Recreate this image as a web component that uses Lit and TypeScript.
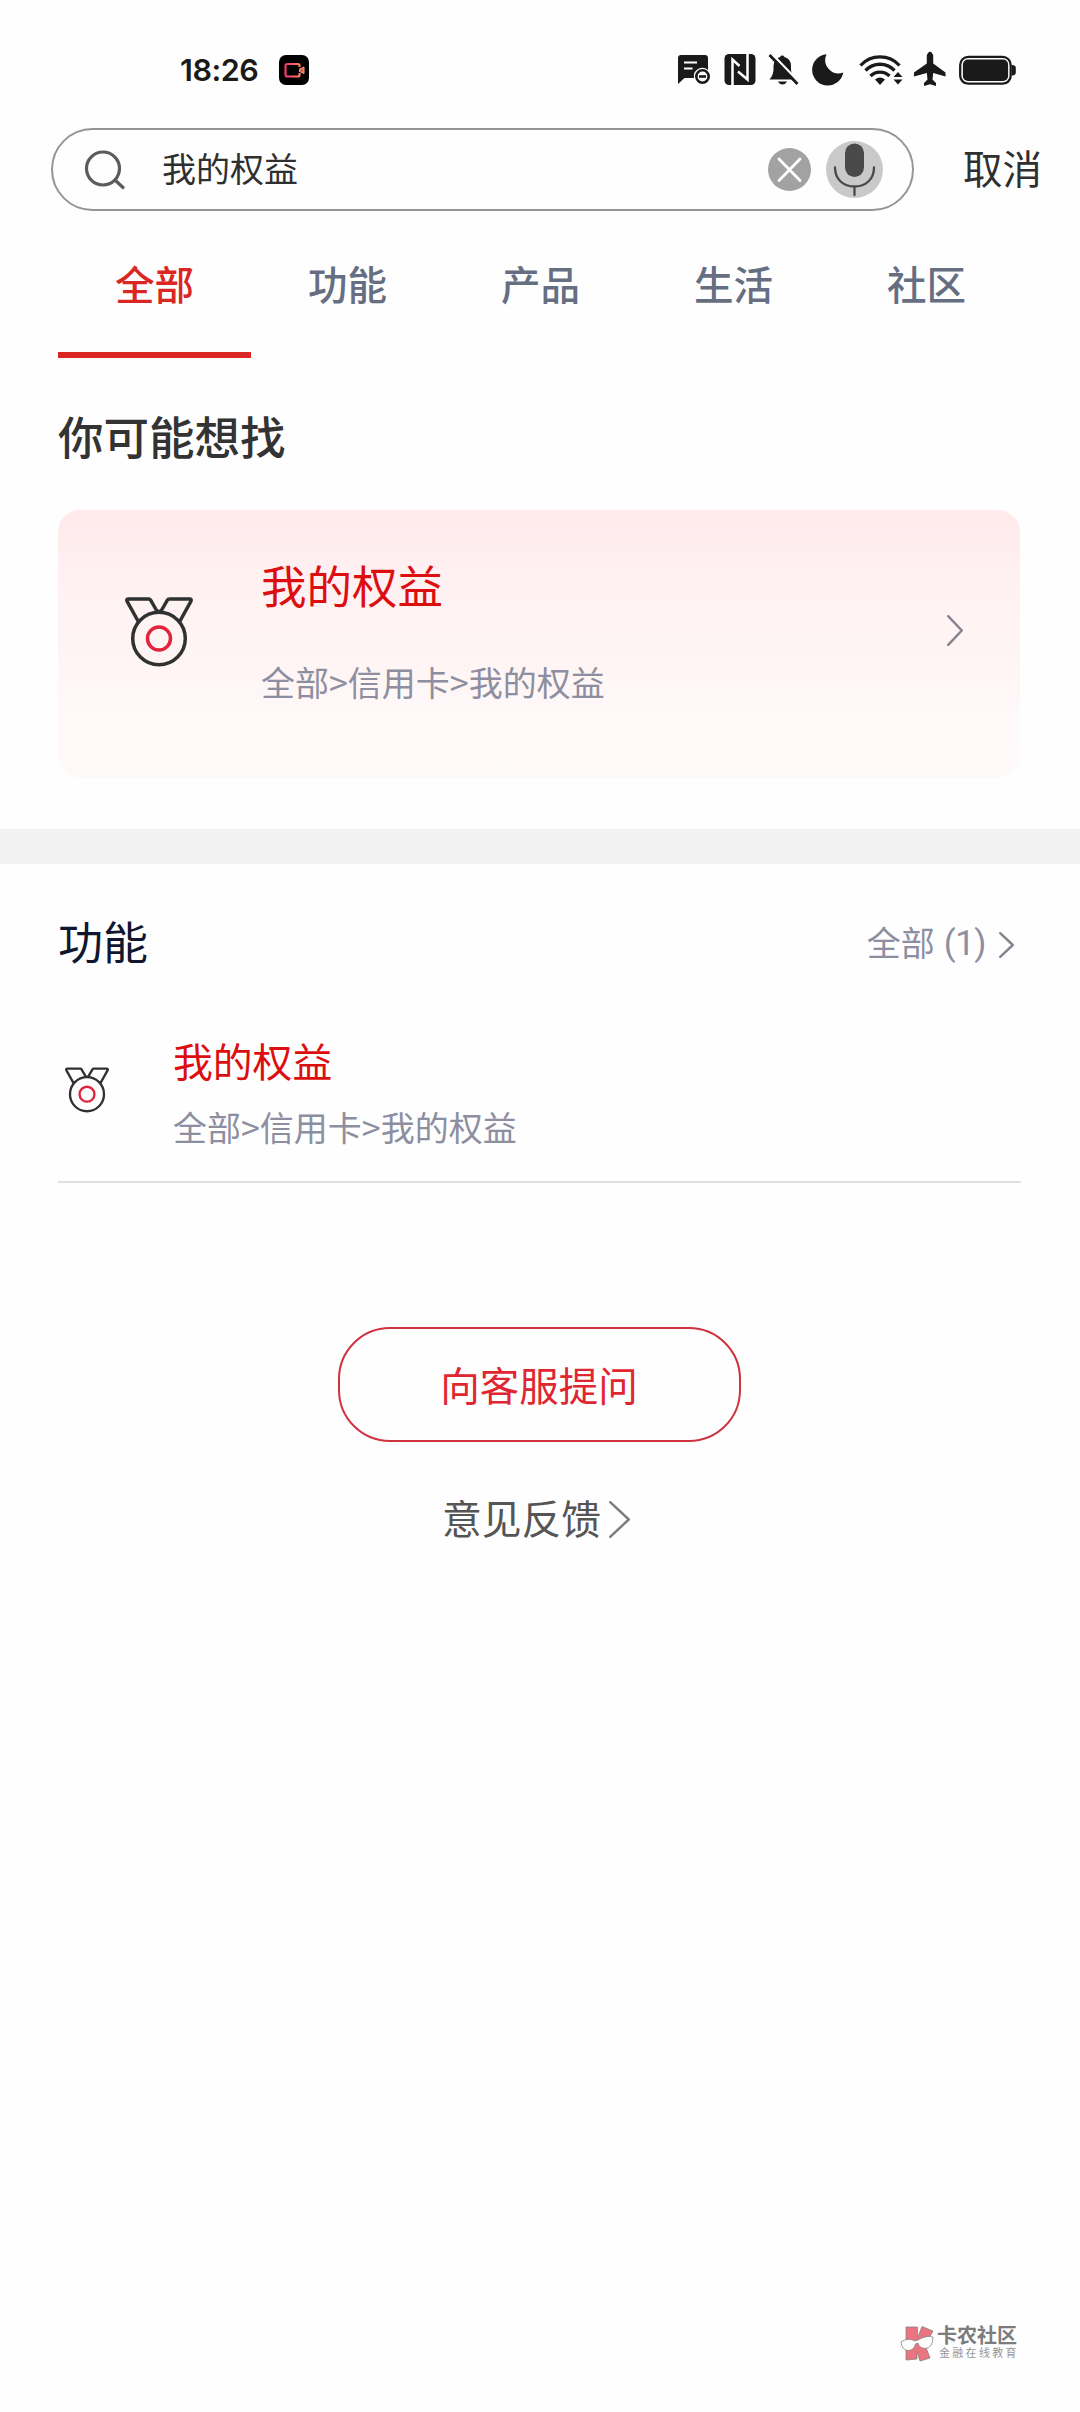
import { LitElement, html, svg, css } from "lit";
import { customElement, property } from "lit/decorators.js";

@customElement("medal-icon")
class MedalIcon extends LitElement {
  @property({ type: Number }) stroke = 3.5;

  static styles = css`
    :host { display: block; flex: none; }
    .medal { display: block; width: 100%; height: 100%; overflow: visible; }
  `;

  render() {
    return html`<svg class="medal" viewBox="0 0 68 70" fill="none" stroke="#2f3133" stroke-width=${this.stroke} stroke-linejoin="round" stroke-linecap="round">
      <path d="M13 24 L2 4.200 Q1.200 2 3.400 2 H23.500 Q25 2 25.800 3.400 L31 12.500 Q32 14.500 34 14.500 Q36 14.500 37 12.500 L42.200 3.400 Q43 2 44.500 2 H64.600 Q66.800 2 66 4.200 L55 24"/>
      <circle cx="34" cy="41.500" r="26.300"/>
      <circle cx="34" cy="41.500" r="11.500" stroke="#e0243a"/>
    </svg>`;
  }
}

@customElement("arrow-icon")
class ArrowIcon extends LitElement {
  @property({ type: Number }) w = 16;
  @property({ type: Number }) h = 31;
  @property() color = "#85828f";

  static styles = css`
    :host { display: block; flex: none; }
    .arrow { display: block; }
  `;

  render() {
    const { w, h } = this;
    return html`<svg class="arrow" width=${w} height=${h} viewBox="0 0 ${w} ${h}" fill="none" stroke=${this.color} stroke-width="2.400" stroke-linecap="round" stroke-linejoin="round">
      <path d="M1.200 1.200 L${w - 1.2} ${h / 2} L1.200 ${h - 1.2}"/>
    </svg>`;
  }
}

const statusIcons = svg`
  <g fill="#1a1a1a">
    <path d="M4 5 H28 Q31 5 31 8 V20 A8.500 8.500 0 0 0 17 28 H7.500 L1 34 V8 Q1 5 4 5 Z"/>
    <path d="M7 12.500 H20 M7 18.500 H15.500" stroke="#fff" stroke-width="2.200" fill="none"/>
    <circle cx="25.500" cy="26.500" r="6.200" fill="#fefefe" stroke="#1a1a1a" stroke-width="2.600"/>
    <path d="M22 26.500 H29" stroke="#1a1a1a" stroke-width="2.600"/>

    <rect x="47.500" y="4" width="31" height="31" rx="4.500"/>
    <path d="M55.500 35 V9.500 L62.500 16 M70.500 4 V29.500 L61 21.500" fill="none" stroke="#fefefe" stroke-width="2.500"/>

    <path d="M92.500 29.500 Q96.500 25 96.500 19 V16 Q97 9 103 7 A2.500 2.500 0 0 1 107.500 7 Q114 9 114 16 V19 Q114 25 118 29.500 Z"/>
    <path d="M101 31.500 H110 Q108.500 34.500 105.500 34.500 Q102.500 34.500 101 31.500 Z"/>
    <path d="M94.500 3.500 L122.500 32.500" stroke="#fefefe" stroke-width="2.500"/>
    <path d="M92.500 5 L120.500 34" stroke="#1a1a1a" stroke-width="2.800"/>

    <path d="M149.500 4.200 A15.700 15.700 0 1 0 166.300 22.600 A13.500 13.500 0 0 1 149.500 4.200 Z"/>

    <g fill="none" stroke="#1a1a1a" stroke-width="3.300">
      <path d="M183.500 15.500 A26.500 26.500 0 0 1 222.500 15.500"/>
      <path d="M188.500 20.500 A20 20 0 0 1 217.500 20.500"/>
      <path d="M193.500 26 A13.500 13.500 0 0 1 212.500 26"/>
    </g>
    <path d="M198 29.500 A8 8 0 0 1 208 29.500 L203 35 Z"/>
    <path d="M221 22 L225.500 27 H216.500 Z M221 34.500 L225.500 29.500 H216.500 Z"/>

    <path d="M249.800 5 Q253 -2 256.200 5 V13.500 L268.500 22.500 V26.500 L256.200 23 L255.500 29.500 L259 33 V36 L253 34.300 L247 36 V33 L250.500 29.500 L249.800 23 L237 26.500 V22.500 L249.800 13.500 Z"/>

    <rect x="283.200" y="6.900" width="50.500" height="26.800" rx="8" fill="none" stroke="#1a1a1a" stroke-width="2.300"/>
    <rect x="285.900" y="9.600" width="45.200" height="21.400" rx="5"/>
    <path d="M335 15 Q338.800 15 338.800 18 V22.500 Q338.800 25.500 335 25.500 Z"/>
  </g>`;

const tabs = ["全部", "功能", "产品", "生活", "社区"];

@customElement("app-root")
class AppRoot extends LitElement {
  static styles = css`
    :host {
      display: block;
      position: relative;
      width: 1080px;
      height: 2412px;
      overflow: hidden;
      background: #fefefe;
      color: #2f2f2f;
      font-family: "Noto Sans CJK SC", sans-serif;
      font-weight: 400;
    }
    .status { display: flex; align-items: center; height: 60px; padding: 40px 40px 28px 180px; }
    .time { font: 600 30.500px/60px Inter, sans-serif; color: #1a1a1a; letter-spacing: -0.500px; width: 99px; }
    .rec { width: 30px; height: 30px; }
    .sys { margin-left: auto; }

    .search-row { display: flex; align-items: center; height: 83px; padding-left: 51px; }
    .search {
      box-sizing: border-box; display: flex; flex: none; align-items: center;
      width: 863px; height: 83px; padding: 0 29px 0 31px;
      border: 2px solid #959595; border-radius: 42px;
    }
    .glass { flex: none; margin-top: -1px; }
    .query { flex: 1; margin-left: 37px; font-size: 34px; line-height: 50px; padding-bottom: 4px; }
    .clear { margin-right: 15px; }
    .cancel { margin-left: 49px; font-size: 39.500px; line-height: 56px; padding-bottom: 6px; white-space: nowrap; }

    .tabs { display: grid; grid-template-columns: repeat(5, 193px); padding-left: 58px; }
    .tab {
      box-sizing: border-box; height: 147px; padding-top: 2px; text-align: center;
      font-size: 39.500px; line-height: 139px; font-weight: 500; color: #666e82;
      border-bottom: 6px solid transparent;
    }
    .tab.active { color: #da2723; border-color: #da2723; }

    .heading { margin: 0; padding: 3px 0 0 58px; font-size: 45.500px; line-height: 149px; font-weight: 500; color: #333; }
    .card {
      box-sizing: border-box; display: flex; align-items: flex-start;
      width: 962px; height: 268px; margin-left: 58px; padding: 44px 57px 0 67px;
      border-radius: 22px;
      background: linear-gradient(#ffe9eb, #fff1f2 26%, #fff5f5 60%, #fff9f9 78%, #fffafa);
    }
    .card-medal { width: 68px; height: 70px; margin-top: 43px; }
    .card-text { flex: 1; margin-left: 68px; }
    .card-title { font-size: 45.500px; line-height: 60px; color: #dc0e10; }
    .card-path { margin-top: 43px; }
    .path { font-size: 34px; line-height: 50px; color: #8d8fa0; white-space: nowrap; }
    .card-arrow { margin-top: 61px; }

    .band { height: 35px; margin-top: 51px; background: #f2f2f2; }

    .section-head { display: flex; align-items: center; height: 153px; padding: 0 66px 0 58px; }
    .section-title { flex: 1; margin: 0; font-size: 45px; line-height: 60px; font-weight: 400; color: #10162f; }
    .more { display: flex; align-items: center; font-size: 34px; line-height: 50px; color: #8d8fa0; padding-top: 3px; }
    .count { font-family: Roboto, sans-serif; font-size: 35px; margin: 3px 13px 0 9px; letter-spacing: -0.500px; }
    .more-arrow { margin-top: 5px; }

    .item {
      box-sizing: border-box; display: flex; align-items: flex-start;
      width: 963px; height: 166px; margin-left: 58px; padding: 18px 0 0 7px;
      border-bottom: 2px solid #e0e0e0;
    }
    .item-medal { width: 44px; height: 46px; margin-top: 32px; }
    .item-text { margin-left: 64px; }
    .item-title { font-size: 39.800px; line-height: 50px; color: #dc0e10; }
    .item-path { margin-top: 17px; }

    .actions { display: flex; flex-direction: column; align-items: center; padding-top: 144px; padding-right: 1px; }
    .ask {
      box-sizing: border-box; width: 403px; height: 115px; padding: 0 1px 2px 0; margin: 0;
      border: 2px solid #cf3340; border-radius: 52px; background: none;
      font: 400 39.500px/108px "Noto Sans CJK SC", sans-serif; color: #df2631;
    }
    .feedback { display: flex; align-items: center; margin: 45px 7px 0 0; font-size: 39.800px; line-height: 60px; color: #555; }
    .feedback-arrow { margin: 4px 0 0 8px; }

    .watermark { position: absolute; left: 900px; top: 2325px; display: flex; opacity: 0.900; }
    .brand { margin-left: 3px; color: #6e6e6e; white-space: nowrap; }
    .brand-name { font-size: 20px; line-height: 20px; font-weight: 700; }
    .brand-sub { font-size: 11px; line-height: 14px; letter-spacing: 2.300px; margin: 0 0 0 2px; color: #8c8c8c; }
  `;

  render() {
    return html`
      <div class="status">
        <span class="time">18:26</span>
        <svg class="rec" viewBox="0 0 30 30">
          <defs><linearGradient id="recGrad" x1="0" x2="1"><stop offset="0" stop-color="#f0386b"/><stop offset="1" stop-color="#ff7e62"/></linearGradient></defs>
          <rect width="30" height="30" rx="7" fill="#000"/>
          <path d="M20.500 12 V10.500 Q20.500 9 19 9 H8.500 Q6.500 9 6.500 11 V19.500 Q6.500 21.500 8.500 21.500 H19 Q20.500 21.500 20.500 20 V18" fill="none" stroke="url(#recGrad)" stroke-width="2.200"/>
          <path d="M20.500 14 L25 12 V18.500 L20.500 16.500 Z" fill="#d9604f" stroke="#ff9a80" stroke-width="1"/>
        </svg>
        <svg class="sys" width="363" height="40" viewBox="0 0 363 40">${statusIcons}</svg>
      </div>

      <div class="search-row">
        <div class="search">
          <svg class="glass" width="41" height="41" viewBox="0 0 41 41" fill="none" stroke="#5b5b5b" stroke-width="3.200" stroke-linecap="round">
            <circle cx="19" cy="19.500" r="16.500"/><path d="M31.500 31.500 L39 38.500"/>
          </svg>
          <span class="query">我的权益</span>
          <svg class="clear" width="43" height="43" viewBox="0 0 43 43">
            <circle cx="21.500" cy="21.500" r="21.500" fill="#a2a2a2"/>
            <path d="M11 11 L32 32.500 M32 11 L11 32.500" stroke="#fff" stroke-width="2.800" stroke-linecap="round"/>
          </svg>
          <svg width="57" height="57" viewBox="0 0 57 57">
            <circle cx="28.500" cy="28.500" r="28.500" fill="#c9c9c9"/>
            <rect x="19" y="2.500" width="19" height="33.500" rx="9.500" fill="#494949"/>
            <path d="M9 26.500 C9 38.500 17.500 45.500 28.500 45.500 C39.500 45.500 48 38.500 48 26.500 M28.500 45.500 V54" fill="none" stroke="#494949" stroke-width="2.300" stroke-linecap="round"/>
          </svg>
        </div>
        <span class="cancel">取消</span>
      </div>

      <nav class="tabs">
        ${tabs.map((t, i) => html`<div class="tab ${i === 0 ? "active" : ""}">${t}</div>`)}
      </nav>

      <h2 class="heading">你可能想找</h2>
      <div class="card">
        <medal-icon class="card-medal"></medal-icon>
        <div class="card-text">
          <div class="card-title">我的权益</div>
          <div class="path card-path">全部&gt;信用卡&gt;我的权益</div>
        </div>
        <arrow-icon class="card-arrow"></arrow-icon>
      </div>

      <div class="band"></div>

      <div class="section-head">
        <h2 class="section-title">功能</h2>
        <div class="more">全部<span class="count">(1)</span><arrow-icon class="more-arrow" .w=${15} .h=${26}></arrow-icon></div>
      </div>
      <div class="item">
        <medal-icon class="item-medal" .stroke=${3.6}></medal-icon>
        <div class="item-text">
          <div class="item-title">我的权益</div>
          <div class="path item-path">全部&gt;信用卡&gt;我的权益</div>
        </div>
      </div>

      <div class="actions">
        <button class="ask">向客服提问</button>
        <div class="feedback"><span>意见反馈</span><arrow-icon class="feedback-arrow" .w=${21} .h=${37} color="#7c7c7c"></arrow-icon></div>
      </div>

      <div class="watermark">
        <svg width="34" height="37" viewBox="0 0 34 37">
          <g fill="#ea6674" stroke="#7b7475" stroke-width="0.800">
            <path d="M6 2 H17.500 V13 L22 1.500 L33 6 L25 20 L30 33 L20 36 L17 26 V34 L6 35 Z"/>
            <path d="M1 17 Q8 12 15 16 L18 15 Q26 10 33 12 Q33 23 25 23.500 Q19 23 18 18 L15.500 19 Q14 25.500 8 25.500 Q2 25 1 17 Z" fill="#fff"/>
          </g>
        </svg>
        <div class="brand">
          <div class="brand-name">卡农社区</div>
          <div class="brand-sub">金融在线教育</div>
        </div>
      </div>
    `;
  }
}
